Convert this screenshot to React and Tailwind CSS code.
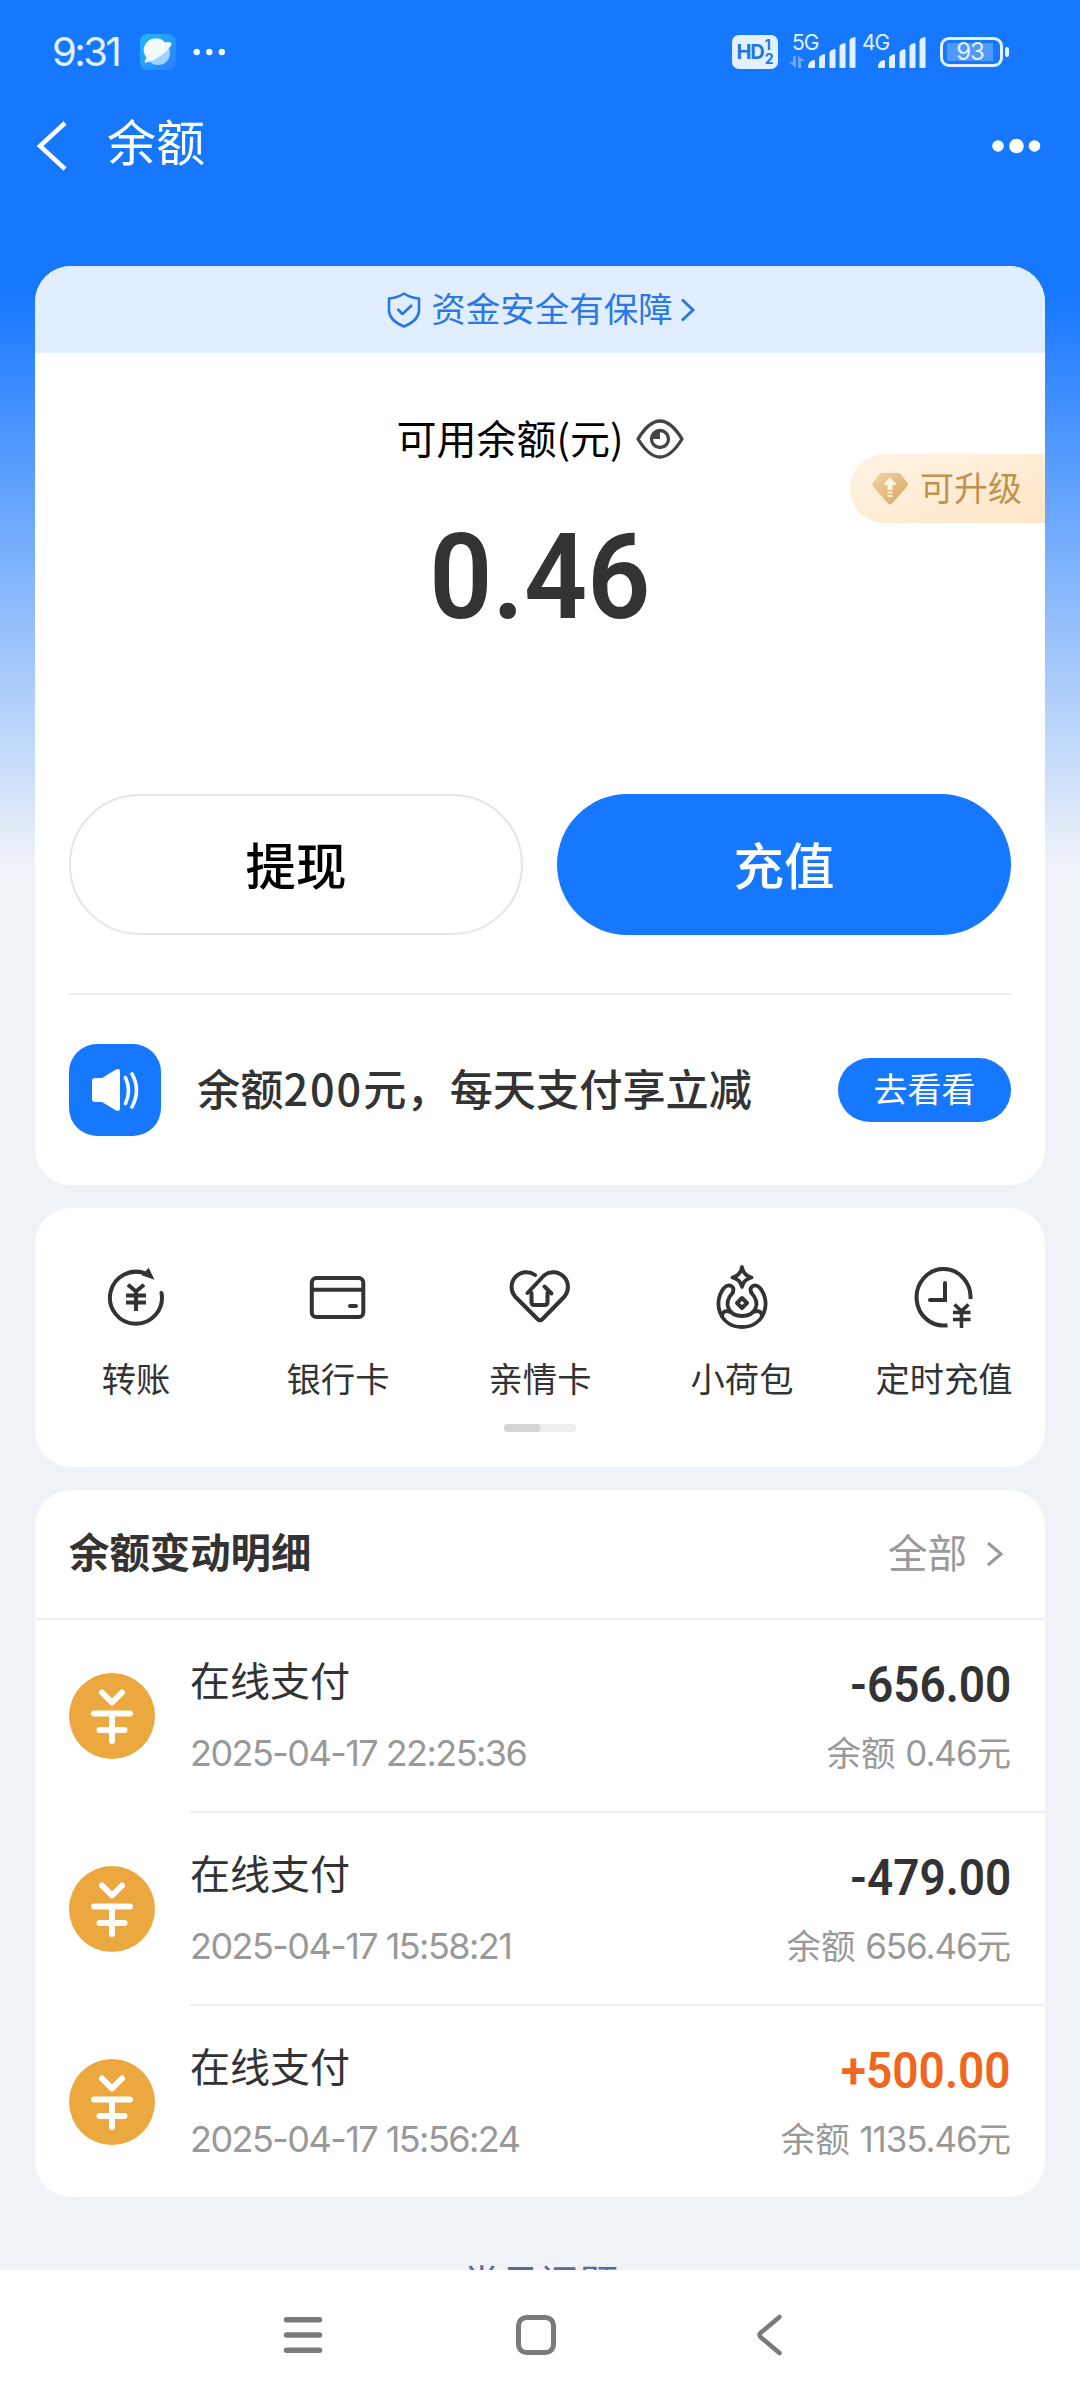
import React, { useState } from "react";

const services = [
    { name: "转账", icon: TransferIcon },
    { name: "银行卡", icon: CardIcon },
    { name: "亲情卡", icon: FamilyIcon },
    { name: "小荷包", icon: PouchIcon },
    { name: "定时充值", icon: TimerIcon },
];

const records = [
    { title: "在线支付", time: "2025-04-17 22:25:36", amount: "-656.00", left: "0.46" },
    { title: "在线支付", time: "2025-04-17 15:58:21", amount: "-479.00", left: "656.46" },
    { title: "在线支付", time: "2025-04-17 15:56:24", amount: "+500.00", left: "1135.46" },
];

function Signal() {
    return (
        <svg width="48" height="32" viewBox="0 0 48 32" fill="#e3f1ff">
            <path d="M0 29.5q0-2 3-4.500q4-2 4 0v6q0 1-1 1h-5q-1 0-1-1z" />
            <path d="M11 22q0-2 5-4q1 0 1 1v12q0 1-1 1h-4q-1 0-1-1z" />
            <path d="M21.500 17q0-3 5-4q1 0 1 1v17q0 1-1 1h-4q-1 0-1-1z" />
            <path d="M31.500 11q0-3 5-4q1 0 1 1v23q0 1-1 1h-4q-1 0-1-1z" />
            <path d="M41.500 5q0-3 5-4q1 0 1 1v29q0 1-1 1h-4q-1 0-1-1z" />
        </svg>
    );
}

function StatusBar() {
    return (
        <div className="flex h-[104px] items-center justify-between pl-[52px] pr-[71px] font-['Inter',sans-serif] text-[#e3f1ff]">
            <div className="flex items-center">
                <span className="w-[88px] text-[40px] leading-none tracking-[-2.5px]">9:31</span>
                <svg width="36" height="36" viewBox="0 0 36 36">
                    <defs>
                        <linearGradient id="app" x1="0" y1="0" x2="1" y2="1">
                            <stop offset="0" stopColor="#22b8ff" />
                            <stop offset="1" stopColor="#2a80ff" />
                        </linearGradient>
                    </defs>
                    <rect width="36" height="36" rx="8" fill="url(#app)" />
                    <circle cx="18" cy="19" r="12" fill="#9fd3ff" />
                    <path d="M5 29q-1-2 1.500-5A12 12 0 0 1 25 8.500q4-1 6.500 0.500q0 3-5 8Q17 26 5 29z" fill="#f1faff" />
                </svg>
                <svg className="ml-[17px]" width="32" height="8" viewBox="0 0 32 8" fill="#f0f8ff">
                    <circle cx="3.700" cy="4" r="3.200" />
                    <circle cx="16.300" cy="4" r="3.200" />
                    <circle cx="28.800" cy="4" r="3.200" />
                </svg>
            </div>
            <div className="flex h-[34px] items-end">
                <div className="flex h-[34px] w-[46px] items-center justify-center rounded-[7px] bg-[#e3f1ff] font-bold text-[#1f74ee]">
                    <span className="text-[20px] leading-none tracking-[-1px]">HD</span>
                    <span className="ml-[1px] flex flex-col text-[14px] leading-[14px]">
                        <span>1</span>
                        <span>2</span>
                    </span>
                </div>
                <div className="relative ml-[11px] h-[34px] w-[67px]">
                    <span className="absolute left-[3px] top-[-3px] text-[21px] leading-[21px] tracking-[-1px]">5G</span>
                    <svg className="absolute bottom-[1px] left-0" width="16" height="12" viewBox="0 0 16 12" fill="#6aa9ff">
                        <path d="M4 0h3v12L0 6h4zM9 12V0l7 5h-4v7z" />
                    </svg>
                    <div className="absolute bottom-[1px] right-0"><Signal /></div>
                </div>
                <div className="relative ml-[6px] h-[34px] w-[64px]">
                    <span className="absolute left-0 top-[-3px] text-[21px] leading-[21px] tracking-[-1px]">4G</span>
                    <div className="absolute bottom-[1px] right-0"><Signal /></div>
                </div>
                <div className="mb-[2px] ml-[14px] flex items-center gap-[2px]">
                    <div className="h-[30px] w-[63px] rounded-[9px] border-3 border-[#e3f1ff] p-[3px]">
                        <div className="ml-[1px] flex h-full w-[46px] items-center justify-center bg-white/25 text-[24px] leading-none tracking-[-1px]">93</div>
                    </div>
                    <div className="h-[10px] w-[4px] rounded-[2px] bg-[#e3f1ff]"></div>
                </div>
            </div>
        </div>
    );
}

function TransferIcon() {
    return (
        <svg width="72" height="72" viewBox="0 0 72 72" fill="none" stroke="#333" strokeWidth="4" strokeLinecap="round">
            <path d="M46.500 13A26 26 0 1 0 61.500 32" />
            <path d="M48.500 8L53 17.500L43 14z" fill="#333" strokeWidth="1.500" />
            <path d="M29.500 25L36 30.500L42.500 25M36 31v17M28 34.500h16M28 41.500h16" strokeLinecap="square" strokeWidth="4" />
        </svg>
    );
}

function CardIcon() {
    return (
        <svg width="72" height="72" viewBox="0 0 72 72" fill="none" stroke="#333" strokeWidth="4">
            <rect x="9.800" y="17" width="51.500" height="39" rx="4.500" />
            <path d="M10 28.800h51" />
            <path d="M48 45h6" strokeLinecap="round" strokeWidth="4" />
        </svg>
    );
}

function FamilyIcon() {
    return (
        <svg width="72" height="72" viewBox="0 0 72 72" fill="none" stroke="#333" strokeWidth="4" strokeLinecap="round" strokeLinejoin="round">
            <path d="M31 14A14.800 14.800 0 0 0 11 35.500L33.500 58Q36 60.500 38.500 58L60.500 35.500A14.800 14.800 0 0 0 40.500 14L23.500 32" />
            <path d="M27.500 32v9q0 3 3 3h10q3 0 3-3v-9M40.500 25.500l7 7" />
        </svg>
    );
}

function PouchIcon() {
    return (
        <svg width="72" height="72" viewBox="0 0 72 72" fill="none" stroke="#333" strokeWidth="3.800" strokeLinejoin="round" strokeLinecap="round">
            <path d="M36 6Q37.500 14.500 45.500 16.500Q37.500 18.500 36 26Q34.500 18.500 26.500 16.500Q34.500 14.500 36 6z" />
            <path d="M36 37l5 5l-5 5l-5-5z" strokeWidth="4" />
            <path d="M26.500 32C29.500 26 23.500 21.500 18 27C6 42 14 66 36 66C58 66 66 42 54 27C48.500 21.500 42.500 26 45.500 32" />
            <path d="M26.500 32C16.500 43 23 55 36 55C49 55 55.500 43 45.500 32" />
            <path d="M16 55Q17 48 24.500 51M56 55Q55 48 47.500 51" />
        </svg>
    );
}

function TimerIcon() {
    return (
        <svg width="72" height="72" viewBox="0 0 72 72" fill="none" stroke="#333" strokeWidth="4">
            <path d="M62.500 38A27 28.200 0 1 0 39.500 64.200" />
            <path d="M37 22v17H22" strokeLinecap="round" strokeWidth="4" />
            <path d="M46.500 43.500l7 6.500l7-6.500M53.500 50v17M45 51.500h17.500M45 58.500h17.500" strokeWidth="3.600" />
        </svg>
    );
}

function CoinIcon() {
    return (
        <svg width="86" height="86" viewBox="0 0 86 86" fill="none" stroke="#fff" strokeWidth="6" strokeLinecap="round" strokeLinejoin="round">
            <circle cx="43" cy="43" r="43" fill="#eba83f" stroke="none" />
            <path d="M33 19.500L43 29.500L53 19.500M25 40.500h36M30.500 57h25M43 41v27" />
        </svg>
    );
}

const App = () => {

    const [show, setShow] = useState(true);

    return (
        <div className="flex h-[2400px] w-[1080px] flex-col overflow-hidden bg-[#eff3f8] font-['Noto_Sans_CJK_SC',sans-serif] text-[#333]">
            <div className="flex h-[2270px] flex-col overflow-hidden bg-[linear-gradient(180deg,#1677ff_0px,#1677ff_290px,#eff3f8_866px)]">
                <StatusBar />

                {/* title bar */}
                <div className="flex h-[84px] items-center pl-[36px] pr-[38px]">
                    <svg width="32" height="50" viewBox="0 0 32 50" fill="none" stroke="#fff" strokeWidth="4.500">
                        <path d="M29 2L4 25L29 48" />
                    </svg>
                    <h1 className="-mt-[13px] ml-[39px] flex-1 text-[49px] leading-none text-white">余额</h1>
                    <svg width="50" height="16" viewBox="0 0 50 16" fill="#fff">
                        <circle cx="6" cy="8" r="5.800" />
                        <circle cx="24.500" cy="8" r="7.300" />
                        <circle cx="42.500" cy="8" r="5.800" />
                    </svg>
                </div>

                {/* balance card */}
                <div className="relative mx-[35px] mt-[78px] flex h-[919px] shrink-0 flex-col overflow-hidden rounded-[36px] bg-white">
                    <div className="flex h-[87px] items-center justify-center bg-[#e1eeff] pl-[3px] text-[#2a78e6]">
                        <svg width="34" height="36" viewBox="0 0 34 36" fill="none" stroke="currentColor" strokeWidth="2.600" strokeLinejoin="round">
                            <path d="M17 1.500Q24 6 32 6.500V19Q31 29 17 34.500Q3 29 2 19V6.500Q10 6 17 1.500z" />
                            <path d="M10.500 17l5 5l9.500-9" />
                        </svg>
                        <span className="-mt-[4px] ml-[10px] text-[34.500px] leading-none">资金安全有保障</span>
                        <svg className="ml-[7px]" width="16" height="24" viewBox="0 0 16 24" fill="none" stroke="currentColor" strokeWidth="3">
                            <path d="M2 1.500L13 12L2 22.500" />
                        </svg>
                    </div>

                    <div className="mt-[61px] flex h-[50px] items-center justify-center text-black">
                        <span className="-mt-[5px] text-[40px] leading-none">可用余额(元)</span>
                        <button className="ml-[12px]" onClick={() => setShow(!show)}>
                            <svg width="48" height="40" viewBox="0 0 48 40" fill="none" stroke="#444" strokeWidth="3.300" strokeLinejoin="round">
                                <path d="M2 20Q13 2 24 2T46 20Q35 38 24 38T2 20z" />
                                <circle cx="24" cy="20" r="8.500" />
                                <path d="M24 12v8h-8a8 8 0 0 1 8-8z" fill="#444" stroke="none" />
                            </svg>
                        </button>
                    </div>

                    <div className="mt-[53px] flex h-[120px] items-center justify-center font-['Roboto'] text-[119px] font-semibold leading-none">
                        <span className="scale-x-[0.93]">{show ? "0.46" : "****"}</span>
                    </div>

                    <div className="absolute right-0 top-[188px] flex h-[69px] w-[195px] items-center rounded-l-full bg-linear-to-br from-[#fff3e5] to-[#ffe6c6] pl-[22px] text-[#c0924e]">
                        <svg width="36" height="32" viewBox="0 0 36 32">
                            <defs>
                                <linearGradient id="gem" x1="0" y1="0" x2="1" y2="1">
                                    <stop offset="0" stopColor="#f3d5a8" />
                                    <stop offset="1" stopColor="#d6a25c" />
                                </linearGradient>
                            </defs>
                            <path d="M10 0h16q2 0 3 1.500l6 8q1.500 2 0 4L20 30.500q-2 2-4 0L1 13.500q-1.500-2 0-4l6-8Q8 0 10 0z" fill="url(#gem)" />
                            <path d="M18 4l7 8h-4.500v5h-5v-5H11zM15.500 18.500h5v2h-5zM15.500 22h5v2h-5z" fill="#fff3e2" />
                        </svg>
                        <span className="-mt-[4px] ml-[12px] text-[34px] leading-none">可升级</span>
                    </div>

                    <div className="mt-[157px] flex justify-between px-[34px]">
                        <button className="h-[141px] w-[454px] rounded-full border-2 border-[#e5e5e5] pb-[3px] text-[50.500px] leading-none font-medium text-black">提现</button>
                        <button className="h-[141px] w-[454px] rounded-full bg-[#1677ff] pb-[3px] text-[50.500px] leading-none font-medium text-white">充值</button>
                    </div>

                    <div className="mx-[34px] mt-[58px] flex flex-1 items-center border-t-2 border-[#eee] pb-[1px]">
                        <div className="flex size-[92px] items-center justify-center rounded-[28px] bg-[#1677ff]">
                            <svg width="48" height="44" viewBox="0 0 48 44" fill="none" stroke="#f4faff" strokeWidth="3.600" strokeLinecap="round">
                                <path d="M4 10h7L25 1.500q4-1.500 4 2v37q0 3.500-4 2L11 34H4q-3 0-3-3V13q0-3 3-3z" fill="#fff" stroke="none" />
                                <path d="M34.500 9.500q6 13 0 26M41 6q9 16 0 33" />
                            </svg>
                        </div>
                        <div className="-mt-[4px] ml-[36px] flex-1 whitespace-nowrap text-[43.200px] font-medium leading-none">
                            余额<span className="tracking-[2px]">200</span>元，每天支付享立减
                        </div>
                        <button className="h-[64px] w-[173px] rounded-full bg-[#1677ff] pb-[3px] text-[34px] leading-none text-white">去看看</button>
                    </div>
                </div>

                {/* services */}
                <div className="mx-[35px] mt-[23px] flex h-[259px] shrink-0 flex-col items-center rounded-[36px] bg-white">
                    <div className="flex w-full pt-[53px]">
                        {services.map((item, index) => {
                            return <div key={index} className="flex w-[202px] flex-col items-center">
                                <item.icon />
                                <span className="mt-[27px] whitespace-nowrap text-[34.300px] leading-[35px]">{item.name}</span>
                            </div>
                        })}
                    </div>
                    <div className="mt-[29px] h-[8px] w-[72px] overflow-hidden rounded-[3px] bg-[#eee]">
                        <div className="h-full w-1/2 rounded-[3px] bg-[#d3d5d5]"></div>
                    </div>
                </div>

                {/* records */}
                <div className="mx-[35px] mt-[23px] h-[707px] shrink-0 overflow-hidden rounded-[36px] bg-white">
                    <div className="flex h-[130px] items-center justify-between border-b-2 border-[#eee] pl-[34px] pr-[41px]">
                        <h2 className="-mt-[5px] text-[40.400px] font-bold leading-none">余额变动明细</h2>
                        <div className="flex items-center text-[#999]">
                            <span className="-mt-[7px] text-[39.500px] leading-none">全部</span>
                            <svg className="ml-[19px]" width="18" height="26" viewBox="0 0 18 26" fill="none" stroke="currentColor" strokeWidth="3.200">
                                <path d="M2 2L15 13L2 24" />
                            </svg>
                        </div>
                    </div>
                    {records.map((item, index) => {
                        return <div key={index} className="flex h-[193px] pl-[34px]">
                            <div className="mt-[53px]"><CoinIcon /></div>
                            <div className="ml-[35px] flex flex-1 justify-between border-b-2 border-[#eee] pr-[34px]">
                                <div className="flex flex-col pt-[37px]">
                                    <span className="text-[40px] leading-[44px]">{item.title}</span>
                                    <span className="mt-[30px] font-['Inter'] text-[36px] leading-[44px] tracking-[-1.550px] text-[#999]">{item.time}</span>
                                </div>
                                <div className="flex flex-col items-end pt-[40px]">
                                    <span className={`origin-right scale-x-[0.92] font-['Roboto'] text-[50px] font-semibold leading-[50px] ${item.amount[0] === "+" ? "text-[#f0661e]" : ""}`}>{item.amount}</span>
                                    <span className="mt-[19px] text-[34.500px] leading-[44px] text-[#999] [word-spacing:2px]">余额 <span className="font-['Inter'] text-[35px] tracking-[-1.100px]">{item.left}</span>元</span>
                                </div>
                            </div>
                        </div>
                    })}
                </div>

                <div className="mt-[62px] h-[11px] shrink-0 overflow-hidden text-center text-[39px] leading-[44px] text-[#566c9b]">常见问题</div>
            </div>

            {/* system navigation */}
            <div className="flex h-[130px] items-center bg-white pl-[282px] text-[#7a7a7a]">
                <svg width="42" height="42" viewBox="0 0 42 42" fill="none" stroke="currentColor" strokeWidth="5.500" strokeLinecap="round">
                    <path d="M4.500 5.700h33M4.500 21h33M4.500 36.300h33" />
                </svg>
                <svg className="ml-[191px]" width="42" height="42" viewBox="0 0 42 42" fill="none" stroke="currentColor" strokeWidth="5">
                    <rect x="3.500" y="3.500" width="35" height="35" rx="8" />
                </svg>
                <svg className="ml-[197px]" width="32" height="42" viewBox="0 0 32 42" fill="none" stroke="currentColor" strokeWidth="4.500" strokeLinecap="round" strokeLinejoin="round">
                    <path d="M25.500 3L7 18.500Q4 21 7 23.500L25.500 39" />
                </svg>
            </div>
        </div>
    );
};

export default App;
